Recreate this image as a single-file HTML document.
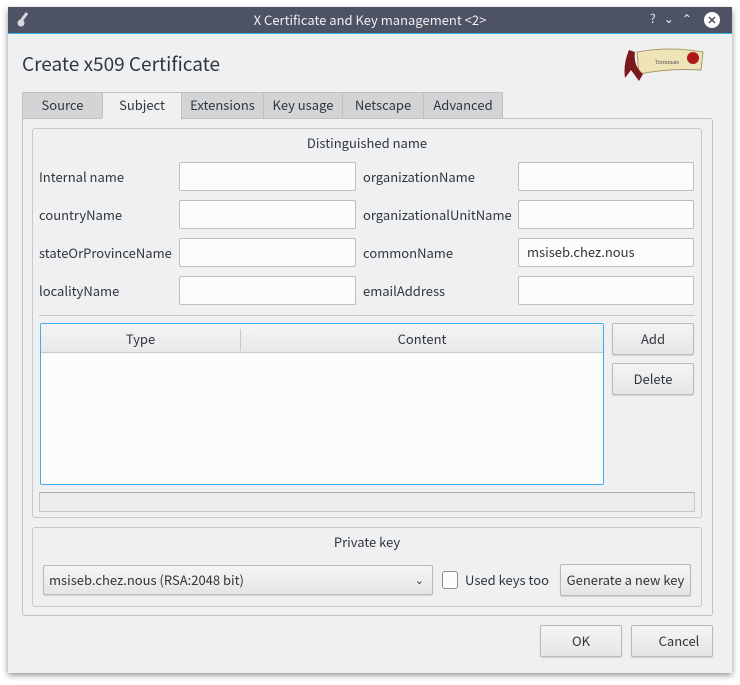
<!DOCTYPE html><html><head><style>
*{box-sizing:border-box;margin:0;padding:0}
body{width:740px;height:685px;background:#fff;font-family:"Noto Sans CJK SC","Liberation Sans",sans-serif;font-size:13px;color:#31363b;position:relative;overflow:hidden}
.a{position:absolute}
.win{left:8px;top:8px;width:724px;height:665px;background:#eff0f1;box-shadow:0 2px 6px rgba(0,0,0,.45)}
.tb{left:8px;top:7px;width:724px;height:27px;background:#4d5264;color:#eff0f1;text-align:center;font-size:13px;border-bottom:1px solid #3daee9}
.tab{top:92px;height:27px;background:#d2d4d6;border:1px solid #bfc1c3;text-align:center;line-height:24px}
.in{height:29px;background:#fcfcfc;border:1px solid #bcbebf;border-radius:2px;padding-left:8px;line-height:26px}
.lb{line-height:27px}
.btn{background:linear-gradient(#f5f5f5,#e4e5e6);border:1px solid #b6b8ba;border-radius:2px;text-align:center;box-shadow:0 1px 1px rgba(0,0,0,.12)}
.grp{border:1px solid #c6c8ca;border-radius:3px}
</style></head><body>
<div class="a win"></div>
<div class="a tb"><div class="a" style="left:0;right:0;top:3px">X Certificate and Key management &lt;2&gt;</div>
<div class="a" style="left:8px;top:4px;"><svg width="14" height="18"><path d="M11 2 L5 10" stroke="#d8d9dc" stroke-width="3"/><circle cx="5" cy="12" r="3.5" fill="#d8d9dc"/></svg></div>
<div class="a" style="left:642px;top:3px;font-size:12px">?&nbsp;&nbsp;&nbsp;⌄&nbsp;&nbsp;&nbsp;⌃</div>
<div class="a" style="left:696px;top:5px;width:16px;height:16px;border-radius:50%;background:#fff;color:#4d5264;font-size:11px;line-height:16px;font-weight:bold">✕</div></div>
<div class="a" style="left:22px;top:50px;font-size:19px;color:#31363b">Create x509 Certificate</div>
<svg class="a" style="left:615px;top:44px" width="92" height="40"><path d="M22 8 Q55 2 88 8 L86 26 Q55 24 24 30 Z" fill="#efe3b8" stroke="#a89a6a"/><path d="M14 6 Q8 20 10 34 L16 26 L24 37 L28 30 Q18 22 20 8 Z" fill="#7a1a1a"/><circle cx="78" cy="14" r="6" fill="#b01818"/><text x="40" y="20" font-size="6" fill="#555" font-family="Liberation Serif">Terminate</text></svg>
<div class="a tab" style="left:22px;width:81px">Source</div>
<div class="a tab" style="left:102px;width:80px;background:#eff0f1;border-bottom:none;height:28px">Subject</div>
<div class="a tab" style="left:181px;width:83px">Extensions</div>
<div class="a tab" style="left:263px;width:80px">Key usage</div>
<div class="a tab" style="left:342px;width:82px">Netscape</div>
<div class="a tab" style="left:423px;width:80px">Advanced</div>
<div class="a" style="left:22px;top:118px;width:691px;height:498px;border:1px solid #bfc1c3;border-radius:0 3px 3px 3px"></div>
<div class="a" style="left:102px;top:118px;width:79px;height:2px;background:#eff0f1"></div>
<div class="a grp" style="left:32px;top:128px;width:670px;height:390px"></div>
<div class="a" style="left:32px;top:133px;width:670px;text-align:center">Distinguished name</div>
<div class="a lb" style="left:39px;top:163px">Internal name</div>
<div class="a lb" style="left:39px;top:201px">countryName</div>
<div class="a lb" style="left:39px;top:239px">stateOrProvinceName</div>
<div class="a lb" style="left:39px;top:277px">localityName</div>
<div class="a in" style="left:179px;top:162px;width:177px"></div>
<div class="a in" style="left:179px;top:200px;width:177px"></div>
<div class="a in" style="left:179px;top:238px;width:177px"></div>
<div class="a in" style="left:179px;top:276px;width:177px"></div>
<div class="a lb" style="left:363px;top:163px">organizationName</div>
<div class="a lb" style="left:363px;top:201px">organizationalUnitName</div>
<div class="a lb" style="left:363px;top:239px">commonName</div>
<div class="a lb" style="left:363px;top:277px">emailAddress</div>
<div class="a in" style="left:518px;top:162px;width:176px"></div>
<div class="a in" style="left:518px;top:200px;width:176px"></div>
<div class="a in" style="left:518px;top:238px;width:176px">msiseb.chez.nous</div>
<div class="a in" style="left:518px;top:276px;width:176px"></div>
<div class="a" style="left:39px;top:315px;width:656px;height:1px;background:#c6c8ca"></div>
<div class="a" style="left:40px;top:323px;width:564px;height:162px;background:#fcfcfc;border:1px solid #3daee9;border-radius:2px"></div>
<div class="a" style="left:41px;top:324px;width:562px;height:29px;background:linear-gradient(#f4f4f5,#e8e9ea);border-bottom:1px solid #c6c8ca"></div>
<div class="a" style="left:41px;top:329px;width:200px;text-align:center;border-right:1px solid #c6c8ca;height:22px">Type</div>
<div class="a" style="left:241px;top:329px;width:362px;text-align:center">Content</div>
<div class="a btn" style="left:612px;top:323px;width:82px;height:32px;line-height:30px">Add</div>
<div class="a btn" style="left:612px;top:363px;width:82px;height:32px;line-height:30px">Delete</div>
<div class="a" style="left:39px;top:492px;width:656px;height:20px;background:#ebeced;border:1px solid #c6c8ca;border-top-color:#a8aaac"></div>
<div class="a grp" style="left:32px;top:527px;width:670px;height:80px"></div>
<div class="a" style="left:32px;top:532px;width:670px;text-align:center">Private key</div>
<div class="a btn" style="left:43px;top:565px;width:390px;height:30px;line-height:28px;text-align:left;padding-left:5px">msiseb.chez.nous (RSA:2048 bit)<span class="a" style="right:8px;top:0;font-size:11px">⌄</span></div>
<div class="a" style="left:442px;top:571px;width:16px;height:18px;border:1px solid #8a8c8e;border-radius:3px;background:#fcfcfc"></div>
<div class="a" style="left:465px;top:570px">Used keys too</div>
<div class="a btn" style="left:560px;top:564px;width:131px;height:32px;line-height:30px">Generate a new key</div>
<div class="a btn" style="left:540px;top:625px;width:82px;height:32px;line-height:30px">OK</div>
<div class="a btn" style="left:631px;top:625px;width:82px;height:32px;line-height:30px;padding-left:14px">Cancel</div>
</body></html>
